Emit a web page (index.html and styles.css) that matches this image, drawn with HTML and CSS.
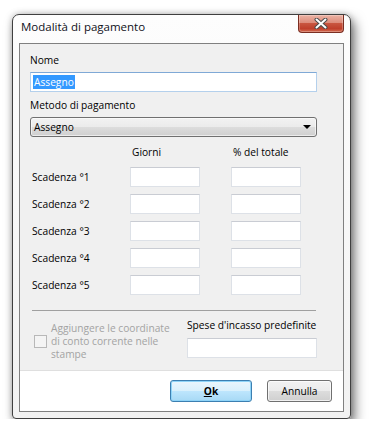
FILE: index.html
```html
<!DOCTYPE html>
<html lang="it">
<head>
  <meta charset="UTF-8" />
  <title>Modalità di pagamento</title>
  <link rel="stylesheet" href="styles.css">
</head>
<body>
  <div class="window">
    <div class="titlebar">
      <span class="title">Modalità di pagamento</span>
      <div class="close-btn">
        <svg width="14" height="11" viewBox="0 0 14 11">
          <path d="M2.5 1.5 L11.5 9.5 M11.5 1.5 L2.5 9.5" stroke="#4a4a4a" stroke-width="4" stroke-linecap="round" fill="none"/>
          <path d="M2.5 1.5 L11.5 9.5 M11.5 1.5 L2.5 9.5" stroke="#fff" stroke-width="2" stroke-linecap="round" fill="none"/>
        </svg>
      </div>
    </div>

    <div class="client">
      <div class="main">
        <div class="lbl">Nome</div>
        <div class="textbox focused"><span class="sel">Assegno</span></div>

        <div class="lbl lbl-metodo">Metodo di pagamento</div>
        <div class="combo">
          <span>Assegno</span>
          <span class="arrow"></span>
        </div>

        <div class="scadenze">
          <span></span>
          <span class="col-head">Giorni</span>
          <span class="col-head">% del totale</span>

          <span class="row-lbl">Scadenza °1</span>
          <div class="textbox"></div>
          <div class="textbox"></div>

          <span class="row-lbl">Scadenza °2</span>
          <div class="textbox"></div>
          <div class="textbox"></div>

          <span class="row-lbl">Scadenza °3</span>
          <div class="textbox"></div>
          <div class="textbox"></div>

          <span class="row-lbl">Scadenza °4</span>
          <div class="textbox"></div>
          <div class="textbox"></div>

          <span class="row-lbl">Scadenza °5</span>
          <div class="textbox"></div>
          <div class="textbox"></div>
        </div>

        <div class="separator"></div>

        <div class="extra">
          <div class="check-wrap">
            <span class="checkbox"></span>
            <span class="check-text">Aggiungere le coordinate di conto corrente nelle stampe</span>
          </div>
          <div class="spese">
            <div class="lbl">Spese d'incasso predefinite</div>
            <div class="textbox"></div>
          </div>
        </div>
      </div>

      <div class="footer">
        <button class="btn btn-default"><u>O</u>k</button>
        <button class="btn">Annulla</button>
      </div>
    </div>
  </div>
</body>
</html>
```

FILE: styles.css
```css
* {
  margin: 0;
  padding: 0;
  box-sizing: border-box;
}

body {
  background: #fff;
  font-family: 'Segoe UI', 'Open Sans', sans-serif;
  font-size: 10.2px;
  color: #000;
  padding: 14px 0 0 12px;
}

.window {
  width: 339px;
  border: 1px solid #3f3f3f;
  border-radius: 7px 7px 4px 4px;
  background: linear-gradient(#fdfdfd, #f2f2f2);
  padding: 0 6px 6px 6px;
  box-shadow: 0 0 6px rgba(0,0,0,0.25), 4px 6px 12px rgba(0,0,0,0.5);
}

/* barra del titolo */
.titlebar {
  height: 28px;
  display: flex;
  justify-content: space-between;
  align-items: flex-start;
}
.title {
  font-size: 11.5px;
  line-height: 16px;
  padding: 4px 0 0 2px;
  color: #101020;
}
.close-btn {
  width: 46px;
  height: 18px;
  border: 1px solid #7a2e22;
  border-top: none;
  border-radius: 0 0 4px 4px;
  background: linear-gradient(#ebb3a5 0%, #dd8c7b 45%, #c8553f 50%, #bf3f2b 80%, #d46d52 100%);
  box-shadow: inset 0 0 0 1px rgba(255,255,255,0.25);
  display: flex;
  align-items: center;
  justify-content: center;
}

/* area client */
.client {
  border: 1px solid #808080;
  background: #f0f0f0;
}
.main {
  padding: 9px 26px 0 10px;
  height: 326px;
}

.lbl {
  line-height: 15px;
  white-space: nowrap;
}
.lbl-metodo {
  margin-top: 6px;
}

.textbox {
  height: 20px;
  background: #fff;
  border: 1px solid #dde1e7;
  border-top-color: #c9ccd3;
}
.main > .textbox {
  margin-top: 4px;
}
.textbox.focused {
  border-color: #b4d0ec;
  border-top-color: #7fa9d6;
  padding: 2px 0 0 2px;
  line-height: 14px;
}
.sel {
  display: inline-block;
  background: #3399ff;
  color: #fff;
  padding: 0 1px;
}

.combo {
  margin-top: 4px;
  height: 20px;
  border: 1px solid #707070;
  border-radius: 3px;
  background: linear-gradient(#f2f2f2 0%, #ebebeb 50%, #dddddd 50%, #cfcfcf 100%);
  box-shadow: inset 0 0 0 1px rgba(255,255,255,0.6);
  display: flex;
  align-items: center;
  justify-content: space-between;
  padding: 0 5px 0 3px;
}
.arrow {
  width: 0;
  height: 0;
  border-left: 4px solid transparent;
  border-right: 4px solid transparent;
  border-top: 4px solid #000;
}

/* griglia scadenze */
.scadenze {
  margin-top: 8px;
  display: grid;
  grid-template-columns: 69px 70px 70px;
  column-gap: 31px;
  row-gap: 7px;
  align-items: center;
}
.col-head {
  line-height: 15px;
  padding-left: 2px;
  white-space: nowrap;
}
.row-lbl {
  padding-left: 2px;
  white-space: nowrap;
}

.separator {
  margin: 15px 1px 0 2px;
  height: 1px;
  background: #a0a0a0;
}

.extra {
  margin-top: 7px;
  display: flex;
  justify-content: space-between;
}
.check-wrap {
  display: flex;
  align-items: center;
  gap: 4px;
  padding: 4px 0 0 4px;
  width: 150px;
}
.checkbox {
  flex: none;
  width: 13px;
  height: 13px;
  border: 1px solid #b8b8b8;
  background: #f4f4f4;
}
.check-text {
  color: #a3a3a3;
  line-height: 13px;
}
.spese {
  width: 130px;
}
.spese .textbox {
  margin-top: 5px;
}

/* pulsanti */
.footer {
  border-top: 1px solid #dfdfdf;
  background: #fff;
  height: 41px;
  display: flex;
  justify-content: flex-end;
  align-items: flex-start;
  gap: 15px;
  padding: 9px 11px 0 0;
}
.btn {
  height: 22px;
  width: 65px;
  font-family: inherit;
  font-size: 10.2px;
  color: #000;
  border: 1px solid #707070;
  border-radius: 3px;
  background: linear-gradient(#f2f2f2 0%, #ebebeb 50%, #dddddd 50%, #cfcfcf 100%);
  box-shadow: inset 0 0 0 1px rgba(255,255,255,0.7);
}
.btn-default {
  width: 82px;
  font-weight: bold;
  border-color: #3c7fb1;
  background: linear-gradient(#eaf6fd 0%, #d9f0fc 50%, #bee6fd 50%, #a7d9f5 100%);
  box-shadow: inset 0 0 0 1px #8fd4f8;
}
```
